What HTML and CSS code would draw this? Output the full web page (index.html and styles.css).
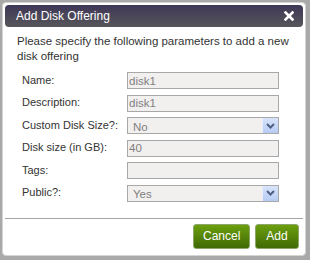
FILE: index.html
```html
<!DOCTYPE html>
<html>
<head>
    <title>Add Disk Offering</title>
    <link rel="stylesheet" href="styles.css">
</head>
<body>
    <div class="dialog">
        <div class="titlebar">
            <span class="title">Add Disk Offering</span>
            <svg class="close" width="10" height="10" viewBox="0 0 10 10">
                <path d="M1.5 1.5 L8.5 8.5 M8.5 1.5 L1.5 8.5" stroke="#fff" stroke-width="2.6" stroke-linecap="square"/>
            </svg>
        </div>

        <p class="intro">Please specify the following parameters to add a new disk offering</p>

        <div class="form">
            <label>Name:</label>
            <input class="field" type="text" value="disk1">

            <label>Description:</label>
            <input class="field" type="text" value="disk1">

            <label>Custom Disk Size?:</label>
            <div class="field select">
                <span class="value">No</span>
                <span class="arrow">
                    <svg width="9" height="6" viewBox="0 0 9 6"><path d="M1 1 L4.5 4.5 L8 1" fill="none" stroke="#4d6185" stroke-width="2"/></svg>
                </span>
            </div>

            <label>Disk size (in GB):</label>
            <input class="field" type="text" value="40">

            <label>Tags:</label>
            <input class="field" type="text" value="">

            <label>Public?:</label>
            <div class="field select">
                <span class="value">Yes</span>
                <span class="arrow">
                    <svg width="9" height="6" viewBox="0 0 9 6"><path d="M1 1 L4.5 4.5 L8 1" fill="none" stroke="#4d6185" stroke-width="2"/></svg>
                </span>
            </div>
        </div>

        <div class="separator"></div>

        <div class="actions">
            <button class="btn">Cancel</button>
            <button class="btn">Add</button>
        </div>
    </div>
</body>
</html>
```

FILE: styles.css
```css
html, body {
    margin: 0;
    height: 100%;
}

body {
    background-color: #a9a9a9;
    padding: 2px;
    box-sizing: border-box;
    font-family: "Liberation Sans", Arial, sans-serif;
    font-size: 11px;
    color: #333;
}

.dialog {
    width: 304px;
    height: 254px;
    box-sizing: border-box;
    background: white;
    border: 1px solid #d4d4d4;
    border-radius: 4px;
    padding: 2px;
}

.titlebar {
    height: 22px;
    display: flex;
    align-items: center;
    justify-content: space-between;
    padding: 0 9px 0 11px;
    border-radius: 4px;
    background: linear-gradient(#3e3757, #57565a);
    color: white;
    font-size: 12px;
}

.close {
    display: block;
}

.intro {
    margin: 7px 12px 0 12px;
    line-height: 15px;
    font-size: 11.5px;
    color: #333;
}

.form {
    display: grid;
    grid-template-columns: 105px 152px;
    row-gap: 5.6px;
    margin: 8px 0 0 17px;
    align-items: center;
}

.form label {
    color: #333;
    line-height: 14px;
    margin-top: -2px;
}

.field {
    box-sizing: border-box;
    height: 17px;
    width: 152px;
    margin: 0;
    padding: 0 1px;
    border: 1px solid #a8a8a8;
    background: #f2efef;
    font-family: "Liberation Sans", Arial, sans-serif;
    font-size: 11.5px;
    color: #808080;
    outline: none;
}

.select {
    display: flex;
    align-items: center;
    justify-content: space-between;
    padding: 0 0 0 5px;
}

.select .value {
    margin-top: 2px;
}

.arrow {
    width: 15px;
    height: 15px;
    display: flex;
    align-items: center;
    justify-content: center;
    background: linear-gradient(#d9e4fb, #b7cbf3);
    border-left: 1px solid #e8eefb;
}

.separator {
    height: 1px;
    background: #a4a4a4;
    margin: 16px 0 0 0;
}

.actions {
    display: flex;
    justify-content: flex-end;
    gap: 5px;
    margin-top: 5px;
    padding-right: 4px;
}

.btn {
    height: 25px;
    padding: 0 9px;
    border: 1px solid #8ea66a;
    border-radius: 3px;
    background: linear-gradient(#6c9f0e, #3f6a05);
    color: white;
    font-family: "Liberation Sans", Arial, sans-serif;
    font-size: 12px;
    cursor: pointer;
}

.btn:first-child {
    width: 57px;
}

.btn:last-child {
    width: 44px;
}
```
